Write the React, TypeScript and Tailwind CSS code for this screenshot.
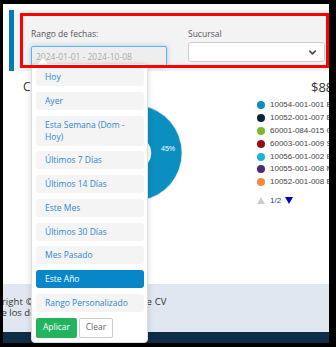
import React from 'react';
import { ChevronDown } from 'lucide-react';

const ranges = [
  'Hoy',
  'Ayer',
  'Esta Semana (Dom - Hoy)',
  'Últimos 7 Días',
  'Últimos 14 Días',
  'Este Mes',
  'Últimos 30 Días',
  'Mes Pasado',
  'Este Año',
  'Rango Personalizado',
];

const legend = [
  { code: '10054-001-001 El Centro', color: '#0b8fc0', pct: 45 },
  { code: '10052-001-007 Estadio', color: '#0b2540', pct: 18 },
  { code: '60001-084-015 Costa', color: '#7cb82f', pct: 12 },
  { code: '60003-001-009 Sur', color: '#990f0f', pct: 9 },
  { code: '10056-001-002 Esmeralda', color: '#19b4d7', pct: 7 },
  { code: '10055-001-008 Mirador', color: '#4e2a78', pct: 5 },
  { code: '10052-001-008 Estrella', color: '#f7893b', pct: 4 },
];

// donut slice path, angles in degrees clockwise from east
const slice = (cx: number, cy: number, R: number, r: number, a0: number, a1: number) => {
  const rad = (a: number) => (a * Math.PI) / 180;
  const p = (rr: number, a: number) => `${cx + rr * Math.cos(rad(a))} ${cy + rr * Math.sin(rad(a))}`;
  const large = a1 - a0 > 180 ? 1 : 0;
  return `M ${p(R, a0)} A ${R} ${R} 0 ${large} 1 ${p(R, a1)} L ${p(r, a1)} A ${r} ${r} 0 ${large} 0 ${p(r, a0)} Z`;
};

const Donut: React.FC = () => {
  let start = -81;
  return (
    <svg width="254" height="110" className="block">
      {legend.map((l) => {
        const end = start + l.pct * 3.6;
        const d = slice(131, 55, 48, 17, start, end);
        start = end;
        return <path key={l.code} d={d} fill={l.color} stroke="#fff" strokeWidth="0.5" />;
      })}
      <text x="165" y="53" fill="#fff" fontSize="7" fontFamily="'Liberation Sans', sans-serif" textAnchor="middle">
        45%
      </text>
    </svg>
  );
};

export default function App() {
  return (
    <div className="w-[336px] h-[347px] bg-black pt-[4px] pl-[3px] pr-[7px] pb-[4px] font-['Open_Sans',sans-serif]">
      <div className="relative h-full bg-white flex flex-col overflow-hidden">
        {/* Filters */}
        <div className="ml-[6px] mt-[6px] h-[61px] border-l-[5px] border-[#0679b9] bg-[#f3f3f3] pl-[17px] pr-[4px] pt-[18px] flex gap-[21px]">
          <div className="w-[136px]">
            <div className="text-[8.5px] leading-[12px] text-[#555] mb-[2px]">Rango de fechas:</div>
            <input
              readOnly
              placeholder="2024-01-01 - 2024-10-08"
              className="w-full h-[21px] px-[4px] bg-[#eeeeee] border border-[#66afe9] rounded-[2px] shadow-[0_0_5px_rgba(102,175,233,0.6)] text-[8.5px] outline-none placeholder:text-[#aaa]"
            />
          </div>
          <div className="w-[137px]">
            <div className="text-[8.5px] leading-[12px] text-[#555] mb-[2px]">Sucursal</div>
            <div className="h-[20px] bg-white border border-[#ccc] rounded-[3px] flex items-center justify-end pr-[6px]">
              <ChevronDown size={11} strokeWidth={3.2} className="text-[#444]" />
            </div>
          </div>
        </div>

        {/* Chart */}
        <div className="flex-1 pt-[9px]">
          <div className="flex justify-between h-[14px]">
            <div className="pl-[20px] text-[12px] leading-[14px] text-[#333]">Cifras por sucursal</div>
            <div className="w-[18px] whitespace-nowrap text-[13px] leading-[14px] text-[#333]">$889,214.50</div>
          </div>
          <div className="flex mt-[4px]">
            <Donut />
            <div className="w-[72px] pt-[1px] font-['Liberation_Sans',sans-serif] text-[8px] text-[#444]">
              {legend.map((l) => (
                <div key={l.code} className="h-[12.8px] flex items-center whitespace-nowrap">
                  <span className="w-[8px] h-[8px] rounded-full shrink-0" style={{ backgroundColor: l.color }} />
                  <span className="ml-[5px]">{l.code}</span>
                </div>
              ))}
              <div className="mt-[6px] h-[12px] flex items-center gap-[4px] text-[#2b3a8c]">
                <span className="w-0 h-0 border-x-[4px] border-x-transparent border-b-[7px] border-b-[#ccc]" />
                <span className="ml-[1px]">1/2</span>
                <span className="w-0 h-0 border-x-[4px] border-x-transparent border-t-[7px] border-t-[#0000cc]" />
              </div>
            </div>
          </div>
        </div>

        {/* Footer */}
        <div className="h-[48px] bg-[#e0e7f0] pt-[12px] text-[9.5px] leading-[11px] text-[#333] whitespace-nowrap">
          <div className="-ml-[24px] tracking-[0.13px]">Copyright © 2024 Grupo Comercial de CV</div>
          <div className="-ml-[27px]">Uso de los derechos reservados</div>
        </div>
        <div className="h-[11px] bg-[#0e2e47]" />

        {/* Date range picker dropdown */}
        <div className="absolute left-[28px] top-[59px] bottom-0 w-[117px] z-10 bg-white border border-[#ddd] rounded-[4px] shadow-[0_2px_6px_rgba(0,0,0,0.15)] pt-[4px] pl-[4px] pr-[3px]">
          <span className="absolute -top-[7px] left-[5px] w-0 h-0 border-x-[6px] border-x-transparent border-b-[7px] border-b-[#ddd]" />
          <span className="absolute -top-[6px] left-[6px] w-0 h-0 border-x-[5px] border-x-transparent border-b-[6px] border-b-white" />
          <div className="flex flex-col gap-[5.75px]">
            {ranges.map((r) => (
              <div
                key={r}
                className={`rounded-[3px] py-[3px] pl-[9px] pr-[6px] text-[8.5px] leading-[12px] ${
                  r === 'Este Año' ? 'bg-[#0887c8] text-white' : 'bg-[#f4f4f4] text-[#2f86d0]'
                }`}
              >
                {r}
              </div>
            ))}
          </div>
          <div className="flex gap-[2px] mt-[6px]">
            <button className="w-[41px] h-[20px] bg-[#22b35f] text-white text-[8.5px] rounded-[2px]">Aplicar</button>
            <button className="w-[34px] h-[20px] bg-white border border-[#ccc] text-[#666] text-[8.5px] rounded-[2px]">Clear</button>
          </div>
        </div>

        {/* Highlight box */}
        <div className="absolute left-[17px] top-[9px] w-[309px] h-[55px] border-[3px] border-[#ff0000] z-20 pointer-events-none" />
      </div>
    </div>
  );
}
